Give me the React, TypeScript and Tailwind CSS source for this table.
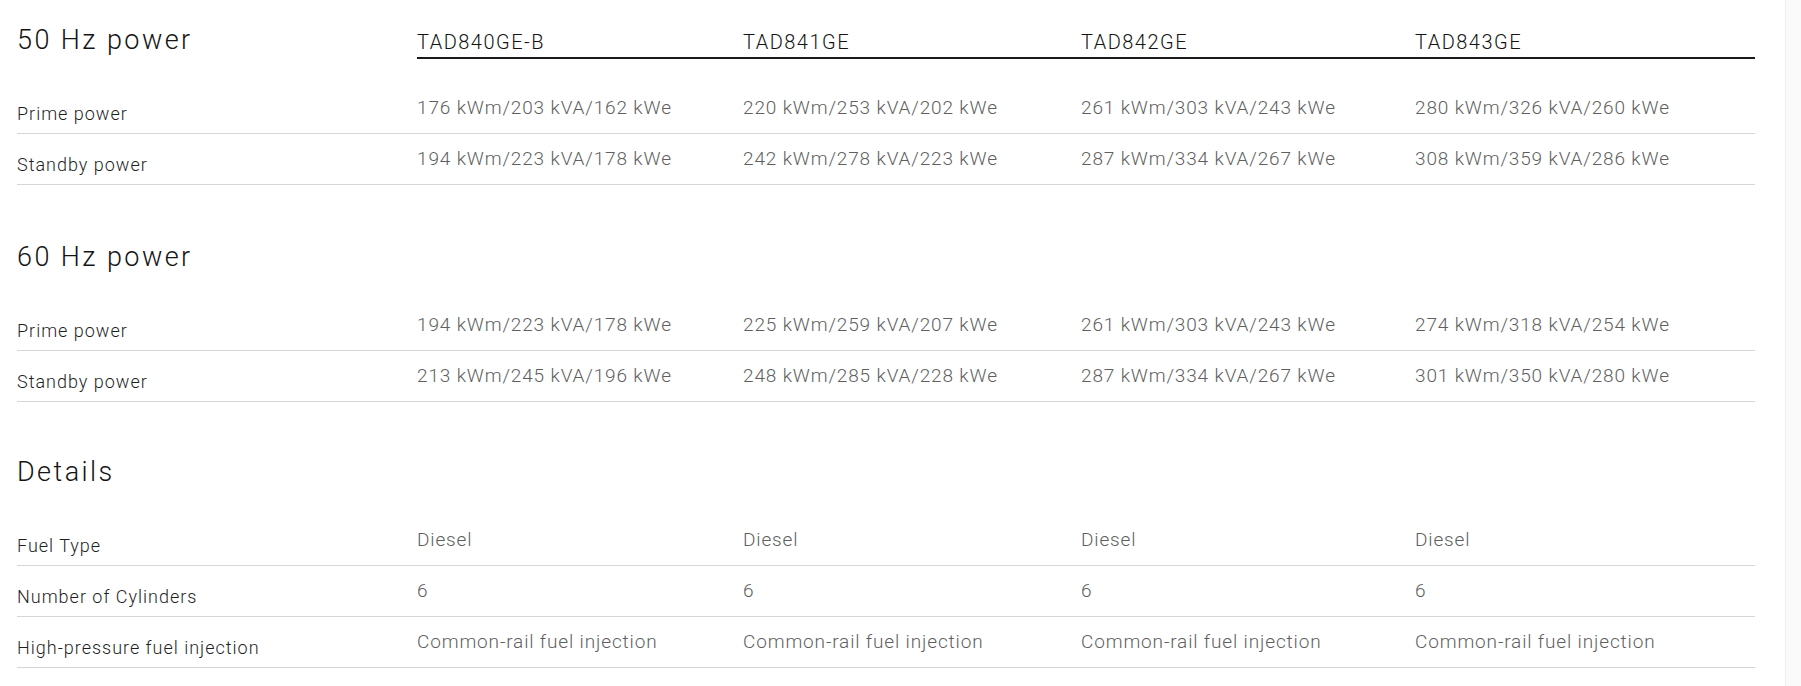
import React from "react";

type Row = { label: string; values: string[] };
type Section = { title: string; models?: string[]; rows: Row[] };

const MODELS = ["TAD840GE-B", "TAD841GE", "TAD842GE", "TAD843GE"];

const SECTIONS: Section[] = [
  {
    title: "50 Hz power",
    models: MODELS,
    rows: [
      {
        label: "Prime power",
        values: [
          "176 kWm/203 kVA/162 kWe",
          "220 kWm/253 kVA/202 kWe",
          "261 kWm/303 kVA/243 kWe",
          "280 kWm/326 kVA/260 kWe",
        ],
      },
      {
        label: "Standby power",
        values: [
          "194 kWm/223 kVA/178 kWe",
          "242 kWm/278 kVA/223 kWe",
          "287 kWm/334 kVA/267 kWe",
          "308 kWm/359 kVA/286 kWe",
        ],
      },
    ],
  },
  {
    title: "60 Hz power",
    rows: [
      {
        label: "Prime power",
        values: [
          "194 kWm/223 kVA/178 kWe",
          "225 kWm/259 kVA/207 kWe",
          "261 kWm/303 kVA/243 kWe",
          "274 kWm/318 kVA/254 kWe",
        ],
      },
      {
        label: "Standby power",
        values: [
          "213 kWm/245 kVA/196 kWe",
          "248 kWm/285 kVA/228 kWe",
          "287 kWm/334 kVA/267 kWe",
          "301 kWm/350 kVA/280 kWe",
        ],
      },
    ],
  },
  {
    title: "Details",
    rows: [
      { label: "Fuel Type", values: ["Diesel", "Diesel", "Diesel", "Diesel"] },
      { label: "Number of Cylinders", values: ["6", "6", "6", "6"] },
      {
        label: "High-pressure fuel injection",
        values: [
          "Common-rail fuel injection",
          "Common-rail fuel injection",
          "Common-rail fuel injection",
          "Common-rail fuel injection",
        ],
      },
    ],
  },
];

const GRID = "grid grid-cols-[400px_326px_338px_334px_1fr]";

function SpecSection({ section, className }: { section: Section; className?: string }) {
  return (
    <section className={className}>
      {/* Title + model header */}
      <div className={`${GRID} h-[38px] items-baseline`}>
        <h2 className="text-[27px] leading-[36px] font-light tracking-[0.09em] text-[#141414]">
          {section.title}
        </h2>
        {section.models?.map((m) => (
          <div
            key={m}
            className="text-[20px] leading-[28px] font-light tracking-[0.075em] text-[#141414] pb-[1px] border-b-2 border-[#1a1a1a]"
          >
            {m}
          </div>
        ))}
      </div>

      {/* Rows */}
      <div className="mt-[23px]">
        {section.rows.map((row) => (
          <div key={row.label} className={`${GRID} h-[51px] border-b border-[#d6d6d6]`}>
            <div className="pt-[17px] text-[18px] leading-[28px] font-light tracking-[0.055em] text-[#1f1f1f]">
              {row.label}
            </div>
            {row.values.map((v, i) => (
              <div
                key={i}
                className="pt-[11px] text-[19px] leading-[28px] font-light tracking-[0.045em] text-[#5f5f5f]"
              >
                {v}
              </div>
            ))}
          </div>
        ))}
      </div>
    </section>
  );
}

export default function App() {
  return (
    <div className="flex min-h-[686px] bg-white font-['Roboto',sans-serif]">
      <main className="flex-1 pl-[17px] pr-[30px] pt-[22px]">
        <SpecSection section={SECTIONS[0]} />
        <SpecSection section={SECTIONS[1]} className="mt-[54px]" />
        <SpecSection section={SECTIONS[2]} className="mt-[52px]" />
      </main>
      {/* scrollbar track */}
      <div className="w-[16px] shrink-0 bg-[#fafafa] border-l border-[#efefef]" />
    </div>
  );
}
